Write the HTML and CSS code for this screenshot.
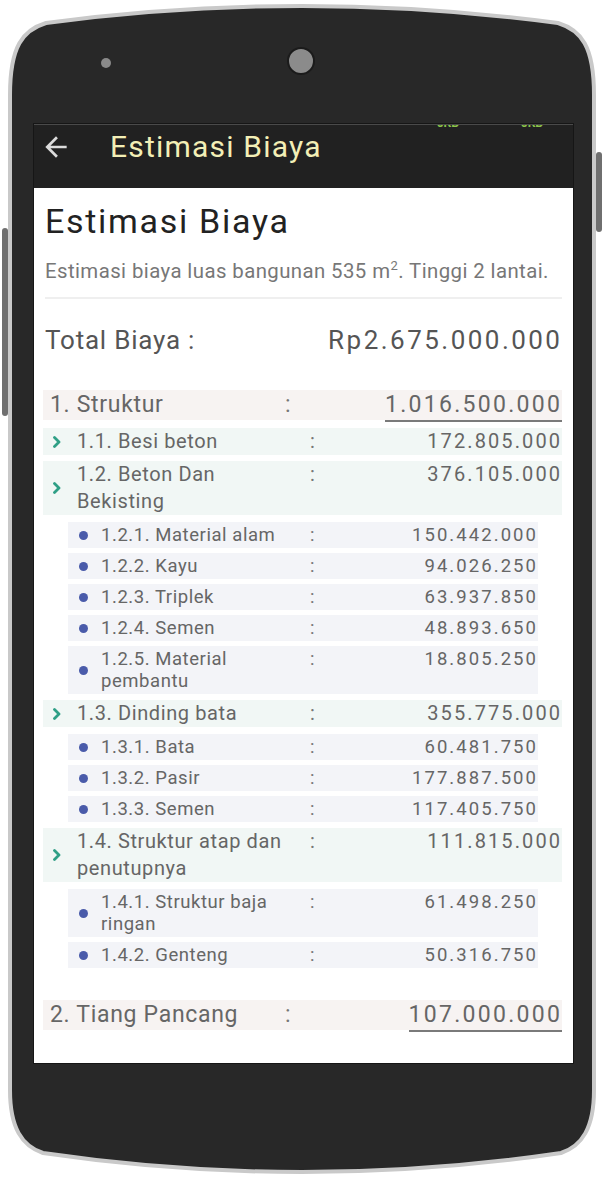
FILE: index.html
```html
<!DOCTYPE html>
<html lang="id">
<head>
<meta charset="utf-8">
<title>Estimasi Biaya</title>
<link rel="stylesheet" href="styles.css">
</head>
<body>
<div class="phone">
  <svg class="frame" width="604" height="1178" viewBox="0 0 604 1178" aria-hidden="true">
    <path d="M 10 95 C 10 46, 23 30, 46 23 Q 302 -11, 558 23 C 581 30, 594 46, 594 95 L 594 1090 C 594 1128, 582 1146, 561 1153 Q 302 1191, 43 1153 C 22 1146, 10 1128, 10 1090 Z" fill="#282828" stroke="#c9c9c9" stroke-width="4"/>
    <circle cx="106" cy="63" r="5" fill="#8a8a8a"/>
    <circle cx="301" cy="61" r="13" fill="#8b8b8b" stroke="#1b1b1b" stroke-width="2"/>
  </svg>
  <span class="side-btn side-left"></span>
  <span class="side-btn side-right"></span>

  <div class="screen">
    <header class="appbar">
      <div class="status"><span>0KB</span><span>0KB</span></div>
      <div class="toolbar">
        <svg class="back" viewBox="0 0 24 24" width="32" height="32" aria-hidden="true"><path d="M20 11H7.83l5.59-5.59L12 4l-8 8 8 8 1.41-1.41L7.83 13H20v-2z" fill="#dcdcdc"/></svg>
        <h1 class="appbar-title">Estimasi Biaya</h1>
      </div>
    </header>

    <main class="content">
      <h2 class="title">Estimasi Biaya</h2>
      <p class="subtitle">Estimasi biaya luas bangunan 535 m<sup>2</sup>. Tinggi 2 lantai.</p>
      <hr class="divider">
      <div class="total">
        <span class="total-label">Total Biaya :</span>
        <span class="total-value">Rp2.675.000.000</span>
      </div>

      <div class="list">
        <div class="row l1"><span class="label">1. Struktur</span><span class="colon">:</span><span class="value">1.016.500.000</span></div>

        <div class="row l2"><span class="icon"><svg class="chev" viewBox="0 0 8 12" width="8" height="12"><path d="M1.5 1.5 L6 6 L1.5 10.5" /></svg></span><span class="label">1.1. Besi beton</span><span class="colon">:</span><span class="value">172.805.000</span></div>
        <div class="row l2"><span class="icon"><svg class="chev" viewBox="0 0 8 12" width="8" height="12"><path d="M1.5 1.5 L6 6 L1.5 10.5" /></svg></span><span class="label">1.2. Beton Dan Bekisting</span><span class="colon">:</span><span class="value">376.105.000</span></div>

        <div class="row l3"><span class="icon"><span class="dot"></span></span><span class="label">1.2.1. Material alam</span><span class="colon">:</span><span class="value">150.442.000</span></div>
        <div class="row l3"><span class="icon"><span class="dot"></span></span><span class="label">1.2.2. Kayu</span><span class="colon">:</span><span class="value">94.026.250</span></div>
        <div class="row l3"><span class="icon"><span class="dot"></span></span><span class="label">1.2.3. Triplek</span><span class="colon">:</span><span class="value">63.937.850</span></div>
        <div class="row l3"><span class="icon"><span class="dot"></span></span><span class="label">1.2.4. Semen</span><span class="colon">:</span><span class="value">48.893.650</span></div>
        <div class="row l3"><span class="icon"><span class="dot"></span></span><span class="label">1.2.5. Material pembantu</span><span class="colon">:</span><span class="value">18.805.250</span></div>

        <div class="row l2"><span class="icon"><svg class="chev" viewBox="0 0 8 12" width="8" height="12"><path d="M1.5 1.5 L6 6 L1.5 10.5" /></svg></span><span class="label">1.3. Dinding bata</span><span class="colon">:</span><span class="value">355.775.000</span></div>

        <div class="row l3"><span class="icon"><span class="dot"></span></span><span class="label">1.3.1. Bata</span><span class="colon">:</span><span class="value">60.481.750</span></div>
        <div class="row l3"><span class="icon"><span class="dot"></span></span><span class="label">1.3.2. Pasir</span><span class="colon">:</span><span class="value">177.887.500</span></div>
        <div class="row l3"><span class="icon"><span class="dot"></span></span><span class="label">1.3.3. Semen</span><span class="colon">:</span><span class="value">117.405.750</span></div>

        <div class="row l2"><span class="icon"><svg class="chev" viewBox="0 0 8 12" width="8" height="12"><path d="M1.5 1.5 L6 6 L1.5 10.5" /></svg></span><span class="label">1.4. Struktur atap dan penutupnya</span><span class="colon">:</span><span class="value">111.815.000</span></div>

        <div class="row l3"><span class="icon"><span class="dot"></span></span><span class="label">1.4.1. Struktur baja ringan</span><span class="colon">:</span><span class="value">61.498.250</span></div>
        <div class="row l3"><span class="icon"><span class="dot"></span></span><span class="label">1.4.2. Genteng</span><span class="colon">:</span><span class="value">50.316.750</span></div>

        <div class="row l1 second"><span class="label">2. Tiang Pancang</span><span class="colon">:</span><span class="value">107.000.000</span></div>
      </div>
    </main>
  </div>
</div>
</body>
</html>
```

FILE: styles.css
```css
* { box-sizing: border-box; }

html, body {
  margin: 0;
  padding: 0;
  background: #ffffff;
}

body {
  font-family: Roboto, "Liberation Sans", sans-serif;
  width: 604px;
  height: 1178px;
  overflow: hidden;
}

.phone {
  position: relative;
  width: 604px;
  height: 1178px;
  padding: 124px 0 0 34px;
}

.frame {
  position: absolute;
  left: 0;
  top: 0;
}

.side-btn {
  position: absolute;
  width: 6px;
  background: #6f6f6f;
  border-radius: 3px;
}
.side-left { left: 2px; top: 228px; height: 188px; }
.side-right { left: 596px; top: 152px; height: 80px; }

.screen {
  position: relative;
  width: 539px;
  height: 939px;
  background: #ffffff;
  overflow: hidden;
  outline: 1px solid #161616;
}

/* ---------- app bar ---------- */
.appbar {
  height: 64px;
  background: #212121;
  border-top: 1px solid #4a4a4a;
}

.status {
  height: 4px;
  overflow: hidden;
  display: flex;
  justify-content: flex-end;
  gap: 62px;
  padding-right: 30px;
}
.status span {
  font-size: 12px;
  line-height: 12px;
  font-weight: bold;
  color: #8bc34a;
  margin-top: -8px;
}

.toolbar {
  display: flex;
  align-items: center;
  height: 35px;
  padding-left: 6px;
}

.back {
  display: block;
  flex: none;
}

.appbar-title {
  margin: 0 0 0 38px;
  font-size: 30px;
  line-height: 35px;
  font-weight: 400;
  letter-spacing: 0.04em;
  color: #f3efb6;
}

/* ---------- content ---------- */
.content {
  padding: 13px 11px 0 11px;
}

.title {
  margin: 0;
  font-size: 34px;
  line-height: 40px;
  font-weight: 400;
  letter-spacing: 0.05em;
  color: #222222;
}

.subtitle {
  margin: 18px 0 0 0;
  font-size: 20.4px;
  line-height: 24px;
  color: #777777;
  letter-spacing: 0.02em;
}
.subtitle sup {
  font-size: 13px;
  line-height: 0;
  vertical-align: 8px;
}

.divider {
  margin: 14px 0 0 0;
  border: 0;
  height: 2px;
  background: #efefef;
}

.total {
  display: flex;
  justify-content: space-between;
  margin-top: 25px;
  padding-right: 2px;
  font-size: 26px;
  line-height: 32px;
  color: #555555;
}
.total-label { letter-spacing: 0.03em; }
.total-value { letter-spacing: 0.095em; margin-right: -0.095em; }

/* ---------- list ---------- */
.list {
  display: flex;
  flex-direction: column;
  gap: 5px;
  margin: 34px 0 0 -2px;
  color: #666666;
}

.row {
  display: grid;
  align-items: start;
}

.label { letter-spacing: 0.03em; }
.colon { color: #777777; }
.value {
  justify-self: end;
}

.icon {
  align-self: center;
  display: flex;
  align-items: center;
}

.l1 {
  grid-template-columns: 235px auto 1fr;
  padding: 0 2px 0 7px;
  background: #f7f3f2;
  font-size: 23px;
  line-height: 30px;
  margin-bottom: 3px;
}
.l1 .value {
  line-height: 30px;
  letter-spacing: 0.1em;
  margin-right: -0.1em;
  border-bottom: 2px solid #7a7a7a;
  margin-bottom: -2px;
}
.l1.second { margin-top: 27px; }

.l2 {
  grid-template-columns: 34px 233px auto 1fr;
  padding-right: 2px;
  background: #f1f7f5;
  font-size: 20px;
  line-height: 27px;
}
.l2 .label { padding-right: 16px; }
.l2 .icon { padding-left: 10px; }
.l2 .value { letter-spacing: 0.105em; margin-right: -0.105em; }

.l2 + .l2 { margin-top: 1px; }
.l2 + .l3 { margin-top: 2px; }
.l3 + .l2 { margin-top: 1px; }

.chev {
  display: block;
  fill: none;
  stroke: #2f9f86;
  stroke-width: 2.8;
  stroke-linecap: round;
  stroke-linejoin: round;
}

.l3 {
  grid-template-columns: 33px 209px auto 1fr;
  margin: 0 24px 0 25px;
  padding: 2px 2px 2px 0;
  background: #f3f4f8;
  font-size: 18.5px;
  line-height: 22px;
}
.l3 .label { padding-right: 14px; }
.l3 .icon { padding-left: 11px; }
.l3 .value { letter-spacing: 0.112em; margin-right: -0.112em; }

.dot {
  display: block;
  width: 9px;
  height: 9px;
  border-radius: 50%;
  background: #4a5baa;
}
```
